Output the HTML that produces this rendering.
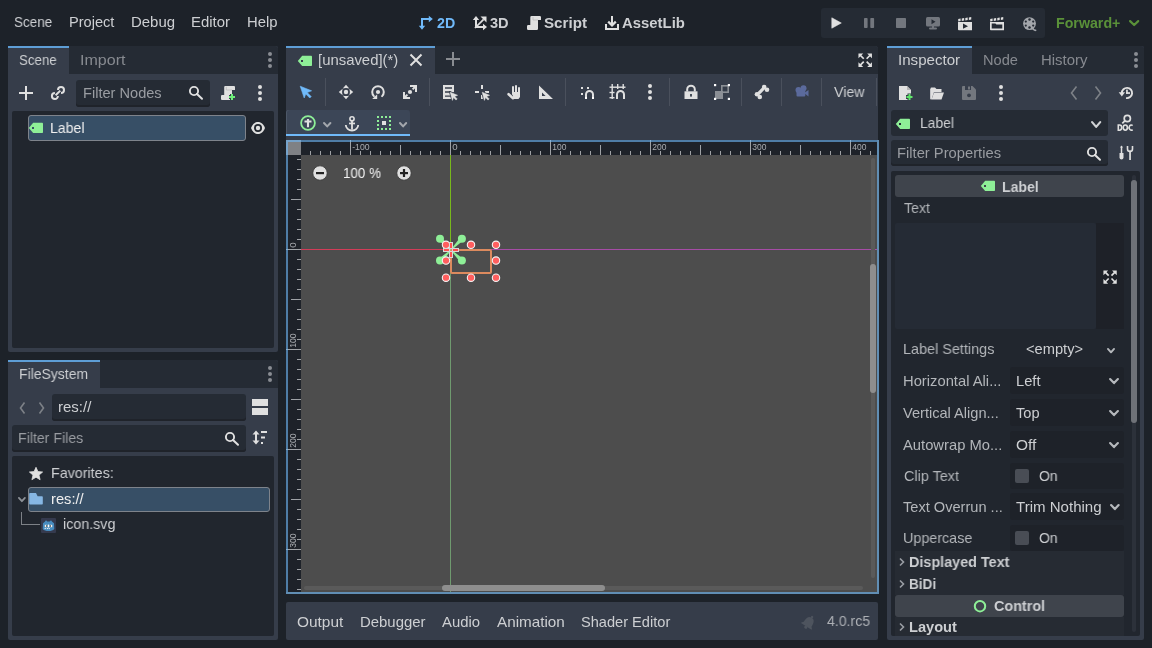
<!DOCTYPE html>
<html><head><meta charset="utf-8"><style>
html,body{margin:0;padding:0;}
body{width:1152px;height:648px;overflow:hidden;background:#1d2229;position:relative;font-family:"Liberation Sans",sans-serif;}
.t{position:absolute;white-space:nowrap;-webkit-font-smoothing:antialiased;will-change:transform;}
.r{position:absolute;display:block;overflow:visible;}
svg text{-webkit-font-smoothing:antialiased;}
</style></head><body>
<div class="t" style="left:14.3px;top:12.94px;font-size:14.6px;line-height:18px;color:#cdcfd2;font-weight:normal;transform:scaleX(0.9227);transform-origin:0 0;">Scene</div>
<div class="t" style="left:69.3px;top:12.94px;font-size:14.6px;line-height:18px;color:#cdcfd2;font-weight:normal;transform:scaleX(1.0000);transform-origin:0 0;">Project</div>
<div class="t" style="left:131.0px;top:12.94px;font-size:14.6px;line-height:18px;color:#cdcfd2;font-weight:normal;transform:scaleX(1.0233);transform-origin:0 0;">Debug</div>
<div class="t" style="left:191.0px;top:12.94px;font-size:14.6px;line-height:18px;color:#cdcfd2;font-weight:normal;transform:scaleX(1.0236);transform-origin:0 0;">Editor</div>
<div class="t" style="left:247.0px;top:12.94px;font-size:14.6px;line-height:18px;color:#cdcfd2;font-weight:normal;transform:scaleX(1.0167);transform-origin:0 0;">Help</div>
<svg class="r" style="left:418px;top:15px" width="16" height="16" viewBox="0 0 16 16"><g fill="#70bafa"><rect x="3" y="3" width="2" height="9"/><rect x="3" y="3" width="8" height="2"/><path d="M0.8 10.8 H7.2 L4 14.8 Z"/><path d="M10.8 0.8 V7.2 L14.8 4 Z"/></g></svg>
<div class="t" style="left:436.5px;top:15.08px;font-size:14.2px;line-height:17px;color:#70bafa;font-weight:bold;transform:scaleX(1.0000);transform-origin:0 0;">2D</div>
<svg class="r" style="left:472px;top:15px" width="16" height="16" viewBox="0 0 16 16"><g fill="#e0e0e0"><rect x="3" y="4" width="2" height="9"/><rect x="3" y="11" width="9" height="2"/><path d="M0.8 5 H7.2 L4 1 Z"/><path d="M11 8.8 V15.2 L15 12 Z"/><path d="M3.6 13.6 L2.4 12.4 L11 3.8 L12.2 5 Z"/><path d="M8.5 1.5 H14.5 V7.5 Z"/></g></svg>
<div class="t" style="left:490.0px;top:15.08px;font-size:14.2px;line-height:17px;color:#cdcfd2;font-weight:bold;transform:scaleX(1.0275);transform-origin:0 0;">3D</div>
<svg class="r" style="left:527px;top:16px" width="14" height="14" viewBox="0 0 14 14"><path d="M4.5 0 H12.8 a1.2 1.2 0 0 1 1.2 1.2 V4 H11 V12.8 a1.2 1.2 0 0 1 -1.2 1.2 H1.2 a1.2 1.2 0 0 1 -1.2 -1.2 V10.2 a1.2 1.2 0 0 1 1.2 -1.2 H3.3 V1.2 a1.2 1.2 0 0 1 1.2 -1.2 Z" fill="#e0e0e0"/><path d="M6 1 V4 H11" stroke="#b8b8b8" stroke-width="0.7" fill="none"/></svg>
<div class="t" style="left:544.0px;top:15.08px;font-size:14.2px;line-height:17px;color:#cdcfd2;font-weight:bold;transform:scaleX(1.0697);transform-origin:0 0;">Script</div>
<svg class="r" style="left:605px;top:16px" width="14" height="14" viewBox="0 0 14 14"><g fill="#e0e0e0"><path d="M0 8 H2 V12 H12 V8 H14 V14 H0 Z"/><rect x="6" y="0" width="2" height="8"/></g><path d="M3.2 5.6 L7 9.4 L10.8 5.6" stroke="#e0e0e0" stroke-width="2.2" fill="none"/></svg>
<div class="t" style="left:622.0px;top:15.08px;font-size:14.2px;line-height:17px;color:#cdcfd2;font-weight:bold;transform:scaleX(1.0500);transform-origin:0 0;">AssetLib</div>
<div class="r" style="left:821px;top:8px;width:224px;height:30px;background:#252b34;border-radius:3px"></div>
<svg class="r" style="left:831px;top:17px" width="12" height="12" viewBox="0 0 12 12"><path d="M0.8 0.8 L10.3 6 L0.8 11.2 Z" fill="#e0e0e0" stroke="#e0e0e0" stroke-width="0.6" stroke-linejoin="round"/></svg>
<svg class="r" style="left:863px;top:17px" width="12" height="12" viewBox="0 0 12 12"><rect x="1" y="1" width="3.6" height="10" rx="0.8" fill="#73777e"/><rect x="7.3" y="1" width="3.8" height="10" rx="0.8" fill="#73777e"/></svg>
<svg class="r" style="left:895px;top:17px" width="12" height="12" viewBox="0 0 12 12"><rect x="1" y="1" width="10" height="10" rx="0.8" fill="#73777e"/></svg>
<svg class="r" style="left:925px;top:16px" width="16" height="16" viewBox="0 0 16 16"><rect x="1" y="1" width="14" height="9.6" rx="1.5" fill="#73777e"/><path d="M6.5 3.3 L10.5 5.8 L6.5 8.3 Z" fill="#252b34"/><rect x="7" y="10" width="2" height="2" fill="#73777e"/><rect x="4" y="11.6" width="8" height="2" rx="1" fill="#73777e"/></svg>
<svg class="r" style="left:957px;top:16px" width="16" height="16" viewBox="0 0 16 16"><g fill="#e0e0e0"><path d="M1.20 3.00 l2.4 -0.4 v2.5 l-2.4 0.4 Z"/><path d="M4.75 2.50 l2.4 -0.4 v2.5 l-2.4 0.4 Z"/><path d="M8.30 2.00 l2.4 -0.4 v2.5 l-2.4 0.4 Z"/><path d="M11.85 1.50 l2.4 -0.4 v2.5 l-2.4 0.4 Z"/><path d="M1 6 H15 V14.2 H1.9 a0.9 0.9 0 0 1 -0.9 -0.9 Z"/></g><path d="M6 7.6 L11 10.2 L6 12.8 Z" fill="#252b34"/></svg>
<svg class="r" style="left:989px;top:16px" width="16" height="16" viewBox="0 0 16 16"><g fill="#e0e0e0"><path d="M1.20 3.00 l2.4 -0.4 v2.5 l-2.4 0.4 Z"/><path d="M4.75 2.50 l2.4 -0.4 v2.5 l-2.4 0.4 Z"/><path d="M8.30 2.00 l2.4 -0.4 v2.5 l-2.4 0.4 Z"/><path d="M11.85 1.50 l2.4 -0.4 v2.5 l-2.4 0.4 Z"/><path d="M1 6 H15 V14.2 H1.9 a0.9 0.9 0 0 1 -0.9 -0.9 Z"/></g><path d="M2.7 7.4 H6.4 L7.4 8.4 H13.3 V12.6 H2.7 Z" fill="#252b34"/></svg>
<svg class="r" style="left:1022px;top:16px" width="16" height="16" viewBox="0 0 16 16"><circle cx="7.5" cy="7.6" r="6.4" fill="#a3a6ab"/><g fill="#252b34"><circle cx="7.5" cy="3.6" r="1.25"/><circle cx="7.5" cy="11.6" r="1.25"/><circle cx="3.8" cy="5.6" r="1.1"/><circle cx="11.2" cy="5.6" r="1.1"/><circle cx="3.8" cy="9.6" r="1.1"/><circle cx="11.2" cy="9.6" r="1.1"/></g><path d="M10.8 12.8 Q12.4 14.6 13.6 14.3" stroke="#a3a6ab" stroke-width="1.7" fill="none" stroke-linecap="round"/></svg>
<div class="t" style="left:1055.6px;top:15.08px;font-size:14.2px;line-height:17px;color:#5a9139;font-weight:bold;transform:scaleX(1.0016);transform-origin:0 0;">Forward+</div>
<svg class="r" style="left:1126.8px;top:17.9px" width="14.30" height="10.10"><path d="M3.10 3.10 L7.15 7.00 L11.20 3.10" stroke="#5a9139" stroke-width="2.2" fill="none" stroke-linecap="round" stroke-linejoin="round"/></svg>
<div class="r" style="left:8px;top:46px;width:270px;height:306px;background:#363d4a;border-radius:2px"></div>
<div class="r" style="left:69px;top:46px;width:209px;height:28px;background:#252b34;border-top-right-radius:3px"></div>
<div class="r" style="left:8px;top:46px;width:61px;height:2px;background:#5e9ed6;"></div>
<div class="t" style="left:19.3px;top:50.94px;font-size:14.6px;line-height:18px;color:#cdcfd2;font-weight:normal;transform:scaleX(0.9106);transform-origin:0 0;">Scene</div>
<div class="t" style="left:80.0px;top:50.94px;font-size:14.6px;line-height:18px;color:#878a90;font-weight:normal;transform:scaleX(1.0990);transform-origin:0 0;">Import</div>
<svg class="r" style="left:267px;top:51px" width="6" height="18" viewBox="0 0 6 18"><circle cx="3" cy="3" r="2" fill="#8a8d93"/><circle cx="3" cy="9" r="2" fill="#8a8d93"/><circle cx="3" cy="15" r="2" fill="#8a8d93"/></svg>
<svg class="r" style="left:18px;top:85px" width="16" height="16" viewBox="0 0 16 16"><path d="M1.0 8 H15.0 M8 1.0 V15.0" stroke="#e0e0e0" stroke-width="2"/></svg>
<svg class="r" style="left:50px;top:85px" width="16" height="16" viewBox="0 0 16 16"><g fill="none" stroke="#e0e0e0" stroke-width="2"><path d="M7.9 11 A3 3 0 1 1 4.9 8"/><path d="M8 5 A3 3 0 1 1 11 8"/><path d="M5.6 10.3 L10.3 5.6"/></g></svg>
<div class="r" style="left:76px;top:80px;width:134px;height:27px;background:#252b34;border-radius:3px;box-shadow:inset 0 -2px 0 #1f232a"></div>
<div class="t" style="left:82.5px;top:83.94px;font-size:14.6px;line-height:18px;color:#9a9da2;font-weight:normal;transform:scaleX(0.9943);transform-origin:0 0;">Filter Nodes</div>
<svg class="r" style="left:187px;top:84px" width="16" height="16" viewBox="0 0 16 16"><circle cx="7" cy="7" r="4.1" stroke="#e0e0e0" stroke-width="1.9" fill="none"/><path d="M10 10 L15 14.8" stroke="#e0e0e0" stroke-width="2" stroke-linecap="round"/></svg>
<svg class="r" style="left:220px;top:85px" width="16" height="16" viewBox="0 0 16 16"><path d="M5.2 1 H14 a1 1 0 0 1 1 1 V5 H12 V14 a1 1 0 0 1 -1 1 H2 a1 1 0 0 1 -1 -1 V11 a1 1 0 0 1 1 -1 H4.2 V2 a1 1 0 0 1 1 -1 Z" fill="#e0e0e0"/><path d="M6.3 1.8 V5 H12" stroke="#bdbdbd" stroke-width="0.8" fill="none"/><path d="M9 12 H15 M12 9 V15" stroke="#363d4a" stroke-width="4"/><path d="M9 12 H15 M12 9 V15" stroke="#6ef07a" stroke-width="2"/></svg>
<svg class="r" style="left:257px;top:84px" width="6" height="18" viewBox="0 0 6 18"><circle cx="3" cy="3" r="2" fill="#e0e0e0"/><circle cx="3" cy="9" r="2" fill="#e0e0e0"/><circle cx="3" cy="15" r="2" fill="#e0e0e0"/></svg>
<div class="r" style="left:12px;top:111px;width:262px;height:237px;background:#21262e;border-radius:2px"></div>
<div class="r" style="left:28px;top:115px;width:218px;height:26px;background:#374f66;border:1px solid #7e838b;box-sizing:border-box;border-radius:3px"></div>
<svg class="r" style="left:28px;top:120px" width="16" height="16" viewBox="0 0 16 16"><path d="M0.8 8 L5.2 2.8 H14.2 a0.8 0.8 0 0 1 0.8 0.8 V12.3 a0.8 0.8 0 0 1 -0.8 0.8 H5.2 Z" fill="#8eef97"/><rect x="4" y="7" width="2" height="2" fill="#374f66"/></svg>
<div class="t" style="left:50.4px;top:118.94px;font-size:14.6px;line-height:18px;color:#f0f0f0;font-weight:normal;transform:scaleX(0.9664);transform-origin:0 0;">Label</div>
<svg class="r" style="left:250px;top:120px" width="16" height="16" viewBox="0 0 16 16"><path d="M1 8 C3 3.2 5.5 2 8 2 C10.5 2 13 3.2 15 8 C13 12.8 10.5 14 8 14 C5.5 14 3 12.8 1 8 Z" fill="#e0e0e0"/><circle cx="8" cy="8" r="4" fill="#21262e"/><circle cx="8" cy="8" r="2.2" fill="#e0e0e0"/></svg>
<div class="r" style="left:8px;top:360px;width:270px;height:280px;background:#363d4a;border-radius:2px"></div>
<div class="r" style="left:100px;top:360px;width:178px;height:28px;background:#252b34;border-top-right-radius:3px"></div>
<div class="r" style="left:8px;top:360px;width:92px;height:2px;background:#5e9ed6;"></div>
<div class="t" style="left:19.4px;top:364.94px;font-size:14.6px;line-height:18px;color:#cdcfd2;font-weight:normal;transform:scaleX(0.9571);transform-origin:0 0;">FileSystem</div>
<svg class="r" style="left:267px;top:365px" width="6" height="18" viewBox="0 0 6 18"><circle cx="3" cy="3" r="2" fill="#8a8d93"/><circle cx="3" cy="9" r="2" fill="#8a8d93"/><circle cx="3" cy="15" r="2" fill="#8a8d93"/></svg>
<svg class="r" style="left:16px;top:400px" width="12" height="16" viewBox="0 0 12 16"><path d="M8.5 2.5 L4.5 8 L8.5 13.5" stroke="#7d8187" stroke-width="1.6" fill="none"/></svg>
<svg class="r" style="left:36px;top:400px" width="12" height="16" viewBox="0 0 12 16"><path d="M3.5 2.5 L7.5 8 L3.5 13.5" stroke="#7d8187" stroke-width="1.6" fill="none"/></svg>
<div class="r" style="left:52px;top:394px;width:194px;height:27px;background:#252b34;border-radius:3px;box-shadow:inset 0 -2px 0 #1f232a"></div>
<div class="t" style="left:58.3px;top:397.94px;font-size:14.6px;line-height:18px;color:#cdcfd2;font-weight:normal;transform:scaleX(1.0277);transform-origin:0 0;">res://</div>
<svg class="r" style="left:252px;top:399px" width="16" height="17" viewBox="0 0 16 17"><rect x="0" y="0" width="16" height="7" fill="#e0e0e0"/><rect x="0" y="9" width="16" height="7" fill="#e0e0e0"/></svg>
<div class="r" style="left:12px;top:425px;width:234px;height:27px;background:#252b34;border-radius:3px;box-shadow:inset 0 -2px 0 #1f232a"></div>
<div class="t" style="left:18.1px;top:428.94px;font-size:14.6px;line-height:18px;color:#9a9da2;font-weight:normal;transform:scaleX(0.9688);transform-origin:0 0;">Filter Files</div>
<svg class="r" style="left:223px;top:430px" width="16" height="16" viewBox="0 0 16 16"><circle cx="7" cy="7" r="4.1" stroke="#e0e0e0" stroke-width="1.9" fill="none"/><path d="M10 10 L15 14.8" stroke="#e0e0e0" stroke-width="2" stroke-linecap="round"/></svg>
<svg class="r" style="left:252px;top:430px" width="16" height="16" viewBox="0 0 16 16"><g fill="#e0e0e0"><rect x="3" y="2.5" width="2" height="10"/><path d="M0.5 4.5 L4 0.5 L7.5 4.5 Z M0.5 10.5 L4 14.5 L7.5 10.5 Z"/><rect x="9" y="1" width="6" height="2"/><rect x="9" y="6.5" width="4" height="2"/><rect x="9" y="12" width="2" height="2"/></g></svg>
<div class="r" style="left:12px;top:456px;width:262px;height:180px;background:#21262e;border-radius:2px"></div>
<svg class="r" style="left:28px;top:466px" width="16" height="16" viewBox="0 0 16 16"><path d="M8 1.3 L9.9 5.6 L14.6 6 L11 9.1 L12.1 13.7 L8 11.2 L3.9 13.7 L5 9.1 L1.4 6 L6.1 5.6 Z" fill="#e0e0e0" stroke="#e0e0e0" stroke-width="0.8" stroke-linejoin="round"/></svg>
<div class="t" style="left:50.6px;top:463.94px;font-size:14.6px;line-height:18px;color:#cdcfd2;font-weight:normal;transform:scaleX(0.9797);transform-origin:0 0;">Favorites:</div>
<div class="r" style="left:28px;top:487px;width:242px;height:25px;background:#374f66;border:1px solid #7e838b;box-sizing:border-box;border-radius:3px"></div>
<svg class="r" style="left:15.7px;top:494.6px" width="11.80" height="9.10"><path d="M2.90 2.90 L5.90 6.20 L8.90 2.90" stroke="#8d9197" stroke-width="1.8" fill="none" stroke-linecap="round" stroke-linejoin="round"/></svg>
<svg class="r" style="left:29px;top:491px" width="15" height="15" viewBox="0 0 15 15"><path d="M0.2 2.9 a0.8 0.8 0 0 1 0.8 -0.8 H7 L8.6 5.3 H13 a0.8 0.8 0 0 1 0.8 0.8 V12.8 a0.8 0.8 0 0 1 -0.8 0.8 H1 a0.8 0.8 0 0 1 -0.8 -0.8 Z" fill="#86b7e4"/></svg>
<div class="t" style="left:50.6px;top:489.94px;font-size:14.6px;line-height:18px;color:#f0f0f0;font-weight:normal;transform:scaleX(1.0062);transform-origin:0 0;">res://</div>
<div class="r" style="left:21px;top:512px;width:1px;height:13px;background:#7d8187;"></div>
<div class="r" style="left:21px;top:524px;width:19px;height:1px;background:#7d8187;"></div>
<svg class="r" style="left:41px;top:518px" width="15" height="15" viewBox="0 0 15 15"><rect x="0" y="0" width="15" height="15" rx="1" fill="#353a4e"/><path d="M2 5.2 L3.8 3.8 L5 2.3 L6.3 3.4 H8.7 L10 2.3 L11.2 3.8 L13 5.2 L13.3 11 C12 12.6 10 13 7.5 13 C5 13 3 12.6 1.7 11 Z" fill="#478cbf"/><rect x="3.8" y="6.8" width="2.6" height="2.4" fill="#f4f0ec"/><rect x="8.6" y="6.8" width="2.6" height="2.4" fill="#f4f0ec"/><rect x="5" y="7.3" width="1.2" height="1.4" fill="#414042"/><rect x="8.8" y="7.3" width="1.2" height="1.4" fill="#414042"/><rect x="7" y="6.6" width="1" height="2.8" fill="#fff"/><g fill="#fff" opacity="0.85"><rect x="3.6" y="10" width="1.2" height="1.1"/><rect x="5.8" y="10" width="1.2" height="1.1"/><rect x="7.6" y="10" width="1.2" height="1.1"/></g></svg>
<div class="t" style="left:62.5px;top:515.44px;font-size:14.6px;line-height:18px;color:#cdcfd2;font-weight:normal;transform:scaleX(0.9795);transform-origin:0 0;">icon.svg</div>
<div class="r" style="left:286px;top:46px;width:592px;height:94px;background:#363d4a;border-radius:3px 3px 0 0"></div>
<div class="r" style="left:435px;top:46px;width:443px;height:28px;background:#252b34;border-top-right-radius:3px"></div>
<div class="r" style="left:286px;top:46px;width:149px;height:2px;background:#5e9ed6;"></div>
<svg class="r" style="left:297px;top:52.5px" width="16" height="16" viewBox="0 0 16 16"><path d="M0.8 8 L5.2 2.8 H14.2 a0.8 0.8 0 0 1 0.8 0.8 V12.3 a0.8 0.8 0 0 1 -0.8 0.8 H5.2 Z" fill="#8eef97"/><rect x="4" y="7" width="2" height="2" fill="#363d4a"/></svg>
<div class="t" style="left:317.5px;top:50.94px;font-size:14.6px;line-height:18px;color:#cdcfd2;font-weight:normal;transform:scaleX(1.0203);transform-origin:0 0;">[unsaved](*)</div>
<svg class="r" style="left:408px;top:52px" width="16" height="16" viewBox="0 0 16 16"><path d="M2.5 2.5 L13.5 13.5 M13.5 2.5 L2.5 13.5" stroke="#e0e0e0" stroke-width="2"/></svg>
<svg class="r" style="left:445px;top:51px" width="16" height="16" viewBox="0 0 16 16"><path d="M1.0 8 H15.0 M8 1.0 V15.0" stroke="#898c91" stroke-width="2"/></svg>
<svg class="r" style="left:857.8px;top:52.8px" width="14.4" height="14.4" viewBox="0 0 16 16"><g fill="#e0e0e0"><path d="M0.5 0.5 H5.8 L0.5 5.8 Z M15.5 0.5 H10.2 L15.5 5.8 Z M0.5 15.5 H5.8 L0.5 10.2 Z M15.5 15.5 H10.2 L15.5 10.2 Z"/></g><path d="M2.5 2.5 L6.4 6.4 M13.5 2.5 L9.6 6.4 M2.5 13.5 L6.4 9.6 M13.5 13.5 L9.6 9.6" stroke="#e0e0e0" stroke-width="1.9"/></svg>
<div class="r" style="left:325px;top:78px;width:1px;height:28px;background:#4a505c;"></div>
<div class="r" style="left:429px;top:78px;width:1px;height:28px;background:#4a505c;"></div>
<div class="r" style="left:565px;top:78px;width:1px;height:28px;background:#4a505c;"></div>
<div class="r" style="left:669px;top:78px;width:1px;height:28px;background:#4a505c;"></div>
<div class="r" style="left:741px;top:78px;width:1px;height:28px;background:#4a505c;"></div>
<div class="r" style="left:781px;top:78px;width:1px;height:28px;background:#4a505c;"></div>
<div class="r" style="left:821px;top:78px;width:1px;height:28px;background:#4a505c;"></div>
<div class="r" style="left:876px;top:78px;width:1px;height:28px;background:#4a505c;"></div>
<svg class="r" style="left:299px;top:85px" width="14" height="14" viewBox="0 0 14 14"><path d="M1.2 1.2 L12.6 5.8 L8.2 7.6 L12.2 11.6 L10.8 13 L6.8 9 L5.2 13 Z" fill="#70bafa" stroke="#70bafa" stroke-width="0.6" stroke-linejoin="round"/></svg>
<svg class="r" style="left:338px;top:84px" width="16" height="16" viewBox="0 0 16 16"><circle cx="8" cy="8" r="2.2" fill="#e0e0e0"/><g fill="#e0e0e0"><path d="M8 0.8 L11.3 4.6 Q8 3.5 4.7 4.6 Z"/><path d="M8 15.2 L11.3 11.4 Q8 12.5 4.7 11.4 Z"/><path d="M0.8 8 L4.6 4.7 Q3.5 8 4.6 11.3 Z"/><path d="M15.2 8 L11.4 4.7 Q12.5 8 11.4 11.3 Z"/></g></svg>
<svg class="r" style="left:370px;top:84px" width="16" height="16" viewBox="0 0 16 16"><circle cx="8" cy="8" r="2.1" fill="#e0e0e0"/><path d="M3.9 12.1 A5.8 5.8 0 1 1 12.1 12.1" stroke="#e0e0e0" stroke-width="2" fill="none" stroke-linecap="round"/><path d="M7.2 10.3 V15 H2.2 Z" fill="#e0e0e0"/></svg>
<svg class="r" style="left:402px;top:84px" width="16" height="16" viewBox="0 0 16 16"><circle cx="8" cy="8" r="2.1" fill="#e0e0e0"/><g stroke="#e0e0e0" stroke-width="2" fill="none"><path d="M8 2 H14 V8"/><path d="M2 8 V14 H8"/><path d="M13.5 2.5 L10.6 5.4"/><path d="M2.5 13.5 L5.4 10.6"/></g></svg>
<svg class="r" style="left:442px;top:84px" width="16" height="16" viewBox="0 0 16 16"><path d="M1 1 H12 V8.3 H9 V15 H1 Z M3 3.2 V4.8 H10 V3.2 Z M3 7.3 V8.7 H9 V7.3 Z M3 11.4 V12.8 H9 V11.4 Z" fill="#e0e0e0" fill-rule="evenodd"/><path d="M7.6 7.6 L16.2 11.2 L13.2 12.4 L15.6 14.8 L13.9 16.5 L11.5 14.1 L10.3 17 Z" fill="#363d4a" stroke="#363d4a" stroke-width="1.4" stroke-linejoin="round"/><path d="M8.2 8.2 L15.6 11.3 L12.7 12.4 L15.2 14.9 L14 16.1 L11.5 13.6 L10.4 16.4 Z" fill="#e0e0e0" stroke="#e0e0e0" stroke-width="0.5" stroke-linejoin="round"/></svg>
<svg class="r" style="left:474px;top:84px" width="16" height="16" viewBox="0 0 16 16"><g fill="#e0e0e0"><rect x="7" y="1" width="2" height="4"/><rect x="1" y="7" width="4" height="2"/><rect x="7" y="11" width="2" height="4"/><rect x="11" y="7" width="4" height="2"/></g><path d="M7.6 7.6 L16.2 11.2 L13.2 12.4 L15.6 14.8 L13.9 16.5 L11.5 14.1 L10.3 17 Z" fill="#363d4a" stroke="#363d4a" stroke-width="1.4" stroke-linejoin="round"/><path d="M8.2 8.2 L15.6 11.3 L12.7 12.4 L15.2 14.9 L14 16.1 L11.5 13.6 L10.4 16.4 Z" fill="#e0e0e0" stroke="#e0e0e0" stroke-width="0.5" stroke-linejoin="round"/></svg>
<svg class="r" style="left:506px;top:84px" width="16" height="16" viewBox="0 0 16 16"><g fill="#e0e0e0"><rect x="6" y="2" width="2" height="9" rx="1"/><rect x="9" y="1" width="2" height="10" rx="1"/><rect x="12" y="3" width="2" height="8" rx="1"/><path d="M6 8 H14 V13 L12.5 15 H7.5 Z"/></g><path d="M2.6 10.2 L7 14.2" stroke="#e0e0e0" stroke-width="2.6" stroke-linecap="round"/></svg>
<svg class="r" style="left:538px;top:84px" width="16" height="16" viewBox="0 0 16 16"><path d="M1 1.5 L15 15 H1 Z M4 8.5 V12 H7.6 Z" fill="#e0e0e0" fill-rule="evenodd"/></svg>
<svg class="r" style="left:580px;top:84px" width="16" height="16" viewBox="0 0 16 16"><g fill="#e0e0e0"><rect x="1" y="3" width="2" height="2"/><rect x="7" y="3" width="2" height="2"/><rect x="1" y="9" width="2" height="2"/></g><path d="M6 15 V10.5 a3.5 3.5 0 0 1 7 0 V15" stroke="#e0e0e0" stroke-width="2" fill="none"/><rect x="5" y="13" width="2" height="2" fill="#fff"/><rect x="12" y="13" width="2" height="2" fill="#fff"/></svg>
<svg class="r" style="left:609px;top:84px" width="17" height="16" viewBox="0 0 17 16"><g fill="#e0e0e0"><rect x="2.5" y="0" width="1.4" height="15"/><rect x="8" y="0" width="1.4" height="5"/><rect x="13.5" y="0" width="1.4" height="5"/><rect x="0.5" y="2.5" width="16" height="1.4"/><rect x="0.5" y="7.8" width="5" height="1.4"/><rect x="0.5" y="13" width="5" height="1.4"/></g><path d="M8 15 V10.5 a3.5 3.5 0 0 1 7 0 V15" stroke="#e0e0e0" stroke-width="2" fill="none"/></svg>
<svg class="r" style="left:647px;top:83.2px" width="6" height="18" viewBox="0 0 6 18"><circle cx="3" cy="3" r="2" fill="#e0e0e0"/><circle cx="3" cy="9" r="2" fill="#e0e0e0"/><circle cx="3" cy="15" r="2" fill="#e0e0e0"/></svg>
<svg class="r" style="left:683px;top:84px" width="16" height="16" viewBox="0 0 16 16"><path d="M4.2 7.5 V5.5 a3.8 3.8 0 0 1 7.6 0 V7.5" stroke="#e0e0e0" stroke-width="2" fill="none"/><path d="M1.5 7.3 H14.5 V15 H1.5 Z" fill="#e0e0e0"/><rect x="7.1" y="10" width="1.8" height="2.6" fill="#363d4a"/></svg>
<svg class="r" style="left:714px;top:84px" width="16" height="16" viewBox="0 0 16 16"><rect x="1" y="7" width="8" height="8" fill="#8b8f95"/><rect x="7.8" y="1.8" width="6.4" height="6.4" stroke="#8b8f95" stroke-width="1.6" fill="none"/><g fill="#fff"><rect x="0" y="0" width="2.2" height="2.2"/><rect x="13.8" y="0" width="2.2" height="2.2"/><rect x="0" y="13.8" width="2.2" height="2.2"/><rect x="13.8" y="13.8" width="2.2" height="2.2"/></g></svg>
<svg class="r" style="left:754px;top:84px" width="16" height="16" viewBox="0 0 16 16"><g fill="#e0e0e0"><path d="M4.2 9.8 L9.8 4.2" stroke="#e0e0e0" stroke-width="3.2"/><circle cx="3" cy="10.2" r="2.3"/><circle cx="5.8" cy="13" r="2.3"/><circle cx="10.2" cy="3" r="2.3"/><circle cx="13" cy="5.8" r="2.3"/></g></svg>
<svg class="r" style="left:795px;top:84px" width="14" height="14" viewBox="0 0 14 14"><g fill="#5b6a9c"><circle cx="3.5" cy="6" r="3"/><circle cx="8.5" cy="4.3" r="3"/><rect x="1.5" y="5.5" width="8.8" height="7" rx="1"/><path d="M9 9 L13.5 6 V12.5 Z"/></g></svg>
<div class="t" style="left:833.8px;top:82.94px;font-size:14.6px;line-height:18px;color:#cdcfd2;font-weight:normal;transform:scaleX(0.9745);transform-origin:0 0;">View</div>
<div class="r" style="left:286px;top:110px;width:124px;height:24px;background:#3c4657;border-radius:3px 3px 0 0;box-shadow:inset 1px 0 0 #4d5868"></div>
<div class="r" style="left:286px;top:134px;width:124px;height:2px;background:#70bafa;"></div>
<svg class="r" style="left:300px;top:115px" width="16" height="16" viewBox="0 0 16 16"><circle cx="8" cy="8" r="6.9" stroke="#8eef97" stroke-width="1.8" fill="none"/><path d="M4.5 6.5 H11.5 M8 4 V12.3" stroke="#e0e0e0" stroke-width="2.1"/></svg>
<svg class="r" style="left:321px;top:119.6px" width="12.40" height="9.40"><path d="M3.00 3.00 L6.20 6.40 L9.40 3.00" stroke="#a3a7ad" stroke-width="2" fill="none" stroke-linecap="round" stroke-linejoin="round"/></svg>
<svg class="r" style="left:344px;top:115px" width="16" height="16" viewBox="0 0 16 16"><circle cx="8" cy="3.8" r="2.1" stroke="#e0e0e0" stroke-width="1.6" fill="none"/><rect x="7.1" y="5.6" width="1.8" height="9" fill="#e0e0e0"/><rect x="5" y="7.6" width="6" height="1.7" fill="#e0e0e0"/><path d="M1.8 10 A6.2 5.5 0 0 0 14.2 10" stroke="#e0e0e0" stroke-width="1.8" fill="none"/></svg>
<svg class="r" style="left:376px;top:115px" width="16" height="16" viewBox="0 0 16 16"><rect x="1" y="1" width="2" height="2" fill="#8eef97"/><rect x="5" y="1" width="2" height="2" fill="#8eef97"/><rect x="9" y="1" width="2" height="2" fill="#8eef97"/><rect x="13" y="1" width="2" height="2" fill="#8eef97"/><rect x="1" y="5" width="2" height="2" fill="#8eef97"/><rect x="13" y="5" width="2" height="2" fill="#8eef97"/><rect x="1" y="9" width="2" height="2" fill="#8eef97"/><rect x="13" y="9" width="2" height="2" fill="#8eef97"/><rect x="1" y="13" width="2" height="2" fill="#8eef97"/><rect x="5" y="13" width="2" height="2" fill="#8eef97"/><rect x="9" y="13" width="2" height="2" fill="#8eef97"/><rect x="13" y="13" width="2" height="2" fill="#8eef97"/><rect x="6" y="6" width="4" height="4" fill="#e0e0e0"/></svg>
<svg class="r" style="left:396.8px;top:119.6px" width="12.20" height="9.40"><path d="M3.00 3.00 L6.10 6.40 L9.20 3.00" stroke="#a3a7ad" stroke-width="2" fill="none" stroke-linecap="round" stroke-linejoin="round"/></svg>
<div class="r" style="left:286px;top:140px;width:593px;height:454px;background:#4d4d4d;"></div>
<div class="r" style="left:286px;top:140px;width:591px;height:15px;background:#1e2229;"></div>
<div class="r" style="left:286px;top:140px;width:15px;height:452px;background:#1e2229;"></div>
<div class="r" style="left:286px;top:140px;width:15px;height:15px;background:#7f8185;"></div>
<svg class="r" style="left:0;top:0" width="1152" height="648"><rect x="310" y="151" width="1" height="4" fill="#9fa2a6"/><rect x="320" y="151" width="1" height="4" fill="#9fa2a6"/><rect x="330" y="151" width="1" height="4" fill="#9fa2a6"/><rect x="340" y="151" width="1" height="4" fill="#9fa2a6"/><rect x="350" y="140" width="1" height="15" fill="#9fa2a6"/><rect x="360" y="151" width="1" height="4" fill="#9fa2a6"/><rect x="370" y="151" width="1" height="4" fill="#9fa2a6"/><rect x="380" y="151" width="1" height="4" fill="#9fa2a6"/><rect x="390" y="151" width="1" height="4" fill="#9fa2a6"/><rect x="400" y="145" width="1" height="10" fill="#9fa2a6"/><rect x="410" y="151" width="1" height="4" fill="#9fa2a6"/><rect x="420" y="151" width="1" height="4" fill="#9fa2a6"/><rect x="430" y="151" width="1" height="4" fill="#9fa2a6"/><rect x="440" y="151" width="1" height="4" fill="#9fa2a6"/><rect x="450" y="140" width="1" height="15" fill="#9fa2a6"/><rect x="460" y="151" width="1" height="4" fill="#9fa2a6"/><rect x="470" y="151" width="1" height="4" fill="#9fa2a6"/><rect x="480" y="151" width="1" height="4" fill="#9fa2a6"/><rect x="490" y="151" width="1" height="4" fill="#9fa2a6"/><rect x="500" y="145" width="1" height="10" fill="#9fa2a6"/><rect x="510" y="151" width="1" height="4" fill="#9fa2a6"/><rect x="520" y="151" width="1" height="4" fill="#9fa2a6"/><rect x="530" y="151" width="1" height="4" fill="#9fa2a6"/><rect x="540" y="151" width="1" height="4" fill="#9fa2a6"/><rect x="550" y="140" width="1" height="15" fill="#9fa2a6"/><rect x="560" y="151" width="1" height="4" fill="#9fa2a6"/><rect x="570" y="151" width="1" height="4" fill="#9fa2a6"/><rect x="580" y="151" width="1" height="4" fill="#9fa2a6"/><rect x="590" y="151" width="1" height="4" fill="#9fa2a6"/><rect x="600" y="145" width="1" height="10" fill="#9fa2a6"/><rect x="610" y="151" width="1" height="4" fill="#9fa2a6"/><rect x="620" y="151" width="1" height="4" fill="#9fa2a6"/><rect x="630" y="151" width="1" height="4" fill="#9fa2a6"/><rect x="640" y="151" width="1" height="4" fill="#9fa2a6"/><rect x="650" y="140" width="1" height="15" fill="#9fa2a6"/><rect x="660" y="151" width="1" height="4" fill="#9fa2a6"/><rect x="670" y="151" width="1" height="4" fill="#9fa2a6"/><rect x="680" y="151" width="1" height="4" fill="#9fa2a6"/><rect x="690" y="151" width="1" height="4" fill="#9fa2a6"/><rect x="700" y="145" width="1" height="10" fill="#9fa2a6"/><rect x="710" y="151" width="1" height="4" fill="#9fa2a6"/><rect x="720" y="151" width="1" height="4" fill="#9fa2a6"/><rect x="730" y="151" width="1" height="4" fill="#9fa2a6"/><rect x="740" y="151" width="1" height="4" fill="#9fa2a6"/><rect x="750" y="140" width="1" height="15" fill="#9fa2a6"/><rect x="760" y="151" width="1" height="4" fill="#9fa2a6"/><rect x="770" y="151" width="1" height="4" fill="#9fa2a6"/><rect x="780" y="151" width="1" height="4" fill="#9fa2a6"/><rect x="790" y="151" width="1" height="4" fill="#9fa2a6"/><rect x="800" y="145" width="1" height="10" fill="#9fa2a6"/><rect x="810" y="151" width="1" height="4" fill="#9fa2a6"/><rect x="820" y="151" width="1" height="4" fill="#9fa2a6"/><rect x="830" y="151" width="1" height="4" fill="#9fa2a6"/><rect x="840" y="151" width="1" height="4" fill="#9fa2a6"/><rect x="850" y="140" width="1" height="15" fill="#9fa2a6"/><rect x="860" y="151" width="1" height="4" fill="#9fa2a6"/><rect x="870" y="151" width="1" height="4" fill="#9fa2a6"/><rect x="297" y="159" width="4" height="1" fill="#9fa2a6"/><rect x="297" y="169" width="4" height="1" fill="#9fa2a6"/><rect x="297" y="179" width="4" height="1" fill="#9fa2a6"/><rect x="297" y="189" width="4" height="1" fill="#9fa2a6"/><rect x="291" y="199" width="10" height="1" fill="#9fa2a6"/><rect x="297" y="209" width="4" height="1" fill="#9fa2a6"/><rect x="297" y="219" width="4" height="1" fill="#9fa2a6"/><rect x="297" y="229" width="4" height="1" fill="#9fa2a6"/><rect x="297" y="239" width="4" height="1" fill="#9fa2a6"/><rect x="286" y="249" width="15" height="1" fill="#9fa2a6"/><rect x="297" y="259" width="4" height="1" fill="#9fa2a6"/><rect x="297" y="269" width="4" height="1" fill="#9fa2a6"/><rect x="297" y="279" width="4" height="1" fill="#9fa2a6"/><rect x="297" y="289" width="4" height="1" fill="#9fa2a6"/><rect x="291" y="299" width="10" height="1" fill="#9fa2a6"/><rect x="297" y="309" width="4" height="1" fill="#9fa2a6"/><rect x="297" y="319" width="4" height="1" fill="#9fa2a6"/><rect x="297" y="329" width="4" height="1" fill="#9fa2a6"/><rect x="297" y="339" width="4" height="1" fill="#9fa2a6"/><rect x="286" y="349" width="15" height="1" fill="#9fa2a6"/><rect x="297" y="359" width="4" height="1" fill="#9fa2a6"/><rect x="297" y="369" width="4" height="1" fill="#9fa2a6"/><rect x="297" y="379" width="4" height="1" fill="#9fa2a6"/><rect x="297" y="389" width="4" height="1" fill="#9fa2a6"/><rect x="291" y="399" width="10" height="1" fill="#9fa2a6"/><rect x="297" y="409" width="4" height="1" fill="#9fa2a6"/><rect x="297" y="419" width="4" height="1" fill="#9fa2a6"/><rect x="297" y="429" width="4" height="1" fill="#9fa2a6"/><rect x="297" y="439" width="4" height="1" fill="#9fa2a6"/><rect x="286" y="449" width="15" height="1" fill="#9fa2a6"/><rect x="297" y="459" width="4" height="1" fill="#9fa2a6"/><rect x="297" y="469" width="4" height="1" fill="#9fa2a6"/><rect x="297" y="479" width="4" height="1" fill="#9fa2a6"/><rect x="297" y="489" width="4" height="1" fill="#9fa2a6"/><rect x="291" y="499" width="10" height="1" fill="#9fa2a6"/><rect x="297" y="509" width="4" height="1" fill="#9fa2a6"/><rect x="297" y="519" width="4" height="1" fill="#9fa2a6"/><rect x="297" y="529" width="4" height="1" fill="#9fa2a6"/><rect x="297" y="539" width="4" height="1" fill="#9fa2a6"/><rect x="286" y="549" width="15" height="1" fill="#9fa2a6"/><rect x="297" y="559" width="4" height="1" fill="#9fa2a6"/><rect x="297" y="569" width="4" height="1" fill="#9fa2a6"/><rect x="297" y="579" width="4" height="1" fill="#9fa2a6"/><rect x="297" y="589" width="4" height="1" fill="#9fa2a6"/></svg>
<svg class="r" style="left:0;top:0;will-change:transform" width="1152" height="648" font-family="Liberation Sans"><text x="352.20" y="150.2" font-size="9.8" textLength="17.40" lengthAdjust="spacingAndGlyphs" fill="#a9acb0">-100</text><text x="452.20" y="150.2" font-size="9.8" textLength="5.40" lengthAdjust="spacingAndGlyphs" fill="#a9acb0">0</text><text x="552.20" y="150.2" font-size="9.8" textLength="14.20" lengthAdjust="spacingAndGlyphs" fill="#a9acb0">100</text><text x="652.20" y="150.2" font-size="9.8" textLength="14.20" lengthAdjust="spacingAndGlyphs" fill="#a9acb0">200</text><text x="752.20" y="150.2" font-size="9.8" textLength="14.20" lengthAdjust="spacingAndGlyphs" fill="#a9acb0">300</text><text x="852.20" y="150.2" font-size="9.8" textLength="14.20" lengthAdjust="spacingAndGlyphs" fill="#a9acb0">400</text><text transform="translate(296.3 247.20) rotate(-90)" x="-0.6" y="0" font-size="9.8" textLength="5.40" lengthAdjust="spacingAndGlyphs" fill="#a9acb0">0</text><text transform="translate(296.3 347.20) rotate(-90)" x="-0.6" y="0" font-size="9.8" textLength="14.20" lengthAdjust="spacingAndGlyphs" fill="#a9acb0">100</text><text transform="translate(296.3 447.20) rotate(-90)" x="-0.6" y="0" font-size="9.8" textLength="14.20" lengthAdjust="spacingAndGlyphs" fill="#a9acb0">200</text><text transform="translate(296.3 547.20) rotate(-90)" x="-0.6" y="0" font-size="9.8" textLength="14.20" lengthAdjust="spacingAndGlyphs" fill="#a9acb0">300</text></svg>
<div class="r" style="left:301px;top:249px;width:149px;height:1px;background:#d23c58;"></div>
<div class="r" style="left:450px;top:249px;width:427px;height:1px;background:#a64ca6;"></div>
<div class="r" style="left:450px;top:155px;width:1px;height:94px;background:#78b81c;"></div>
<div class="r" style="left:450px;top:250px;width:1px;height:342px;background:#6f9a6f;"></div>
<svg class="r" style="left:311px;top:164px" width="18" height="18" viewBox="0 0 18 18"><circle cx="9" cy="9" r="7.2" fill="#e0e0e0" stroke="#3a3a3a" stroke-width="0.8"/><rect x="5" y="8" width="8" height="2.2" fill="#222"/></svg>
<div class="t" style="left:343.0px;top:164.65px;font-size:14px;line-height:17px;color:#f4f4f4;font-weight:normal;transform:scaleX(0.9572);transform-origin:0 0;">100 %</div>
<svg class="r" style="left:395px;top:164px" width="18" height="18" viewBox="0 0 18 18"><circle cx="9" cy="9" r="7.2" fill="#e0e0e0" stroke="#3a3a3a" stroke-width="0.8"/><rect x="5" y="8" width="8" height="2.2" fill="#222"/><rect x="7.9" y="5" width="2.2" height="8" fill="#222"/></svg>
<svg class="r" style="left:0;top:0" width="1152" height="648"><polygon points="451.29,249.72 441.57,237.26 438.43,240.34 450.71,250.28" fill="#8eef97"/><polygon points="451.29,250.28 463.48,240.33 460.32,237.27 450.71,249.72" fill="#8eef97"/><polygon points="450.72,249.71 438.47,259.02 441.53,262.18 451.28,250.29" fill="#8eef97"/><polygon points="450.72,250.29 460.37,262.18 463.43,259.02 451.28,249.71" fill="#8eef97"/><circle cx="440" cy="238.8" r="4" fill="#8eef97"/><circle cx="461.9" cy="238.8" r="4" fill="#8eef97"/><circle cx="440" cy="260.6" r="4" fill="#8eef97"/><circle cx="461.9" cy="260.6" r="4" fill="#8eef97"/><rect x="451" y="250" width="40" height="23" rx="1" fill="none" stroke="#dc8a5e" stroke-width="2"/><circle cx="446" cy="244.8" r="3.7" fill="#ff5f5f" stroke="#f4f4f4" stroke-width="1.1"/><circle cx="446" cy="260.6" r="3.7" fill="#ff5f5f" stroke="#f4f4f4" stroke-width="1.1"/><circle cx="446" cy="277.7" r="3.7" fill="#ff5f5f" stroke="#f4f4f4" stroke-width="1.1"/><circle cx="471" cy="244.8" r="3.7" fill="#ff5f5f" stroke="#f4f4f4" stroke-width="1.1"/><circle cx="471" cy="277.7" r="3.7" fill="#ff5f5f" stroke="#f4f4f4" stroke-width="1.1"/><circle cx="496" cy="244.8" r="3.7" fill="#ff5f5f" stroke="#f4f4f4" stroke-width="1.1"/><circle cx="496" cy="260.6" r="3.7" fill="#ff5f5f" stroke="#f4f4f4" stroke-width="1.1"/><circle cx="496" cy="277.7" r="3.7" fill="#ff5f5f" stroke="#f4f4f4" stroke-width="1.1"/><rect x="443" y="248" width="7" height="4" fill="#d8d8d8"/><rect x="444" y="249" width="5" height="2" fill="#ff5252"/><rect x="452" y="248" width="7" height="4" fill="#d8d8d8"/><rect x="453" y="249" width="5" height="2" fill="#ff5252"/><rect x="449" y="242" width="4" height="7" fill="#d8d8d8"/><rect x="450" y="243" width="2" height="5" fill="#ff5252"/><rect x="449" y="251" width="4" height="7" fill="#d8d8d8"/><rect x="450" y="252" width="2" height="5" fill="#ff5252"/></svg>
<div class="r" style="left:871px;top:158px;width:4px;height:420px;background:#5a5a5a;border-radius:2px"></div>
<div class="r" style="left:870px;top:264px;width:6px;height:129px;background:#8e8e8e;border-radius:3px"></div>
<div class="r" style="left:304px;top:586px;width:559px;height:4px;background:#5a5a5a;border-radius:2px"></div>
<div class="r" style="left:442px;top:585px;width:163px;height:6px;background:#8e8e8e;border-radius:3px"></div>
<div class="r" style="left:286px;top:140px;width:593px;height:454px;background:transparent;box-sizing:border-box;border:2px solid rgba(112,186,250,0.6)"></div>
<div class="r" style="left:286px;top:602px;width:592px;height:38px;background:#363d4a;border-radius:2px"></div>
<div class="t" style="left:296.5px;top:612.94px;font-size:14.6px;line-height:18px;color:#cdcfd2;font-weight:normal;transform:scaleX(1.0571);transform-origin:0 0;">Output</div>
<div class="t" style="left:359.5px;top:612.94px;font-size:14.6px;line-height:18px;color:#cdcfd2;font-weight:normal;transform:scaleX(1.0218);transform-origin:0 0;">Debugger</div>
<div class="t" style="left:441.7px;top:612.94px;font-size:14.6px;line-height:18px;color:#cdcfd2;font-weight:normal;transform:scaleX(1.0188);transform-origin:0 0;">Audio</div>
<div class="t" style="left:497.0px;top:612.94px;font-size:14.6px;line-height:18px;color:#cdcfd2;font-weight:normal;transform:scaleX(1.0447);transform-origin:0 0;">Animation</div>
<div class="t" style="left:580.8px;top:612.94px;font-size:14.6px;line-height:18px;color:#cdcfd2;font-weight:normal;transform:scaleX(0.9955);transform-origin:0 0;">Shader Editor</div>
<svg class="r" style="left:801px;top:613.5px" width="16" height="16" viewBox="0 0 16 16"><g transform="rotate(32 8 8)" fill="#4e545e"><circle cx="8" cy="2.2" r="1.2"/><path d="M3.4 10.6 C3.4 5.6 4.6 2.9 8 2.9 C11.4 2.9 12.6 5.6 12.6 10.6 L14.2 12.4 V13.2 H1.8 V12.4 Z"/><circle cx="8" cy="14" r="1.6"/></g></svg>
<div class="t" style="left:826.9px;top:612.24px;font-size:14.6px;line-height:18px;color:#adb0b5;font-weight:normal;transform:scaleX(0.9664);transform-origin:0 0;">4.0.rc5</div>
<div class="r" style="left:887px;top:46px;width:257px;height:594px;background:#363d4a;border-radius:2px"></div>
<div class="r" style="left:972px;top:46px;width:172px;height:28px;background:#252b34;border-top-right-radius:3px"></div>
<div class="r" style="left:887px;top:46px;width:85px;height:2px;background:#5e9ed6;"></div>
<div class="t" style="left:898.0px;top:50.94px;font-size:14.6px;line-height:18px;color:#cdcfd2;font-weight:normal;transform:scaleX(1.0349);transform-origin:0 0;">Inspector</div>
<div class="t" style="left:983.4px;top:50.94px;font-size:14.6px;line-height:18px;color:#878a90;font-weight:normal;transform:scaleX(1.0000);transform-origin:0 0;">Node</div>
<div class="t" style="left:1041.4px;top:50.94px;font-size:14.6px;line-height:18px;color:#878a90;font-weight:normal;transform:scaleX(1.0242);transform-origin:0 0;">History</div>
<svg class="r" style="left:1133px;top:51px" width="6" height="18" viewBox="0 0 6 18"><circle cx="3" cy="3" r="2" fill="#8a8d93"/><circle cx="3" cy="9" r="2" fill="#8a8d93"/><circle cx="3" cy="15" r="2" fill="#8a8d93"/></svg>
<svg class="r" style="left:898px;top:85px" width="16" height="16" viewBox="0 0 16 16"><path d="M1 1 H9 L13 5 V15 H1 Z" fill="#e0e0e0"/><path d="M9 1 V5 H13" fill="#b5b5b5"/><path d="M8 12 H15 M11.5 8.5 V15.5" stroke="#363d4a" stroke-width="4"/><path d="M8.5 12 H14.5 M11.5 9 V15" stroke="#5fe36a" stroke-width="2"/></svg>
<svg class="r" style="left:929px;top:85px" width="16" height="16" viewBox="0 0 16 16"><path d="M1.5 3.5 a1 1 0 0 1 1 -1 H6 L7.5 4 H12.5 V7 H5 L2.5 14.5 H1.5 Z" fill="#e0e0e0"/><path d="M5 7.5 H15 L12.5 14.5 H2.5 Z" fill="#e0e0e0"/><path d="M2 14 V4" stroke="#e0e0e0" stroke-width="1.3"/></svg>
<svg class="r" style="left:961px;top:85px" width="16" height="16" viewBox="0 0 16 16"><path d="M1 2 a1 1 0 0 1 1 -1 H11.5 L15 4.5 V14 a1 1 0 0 1 -1 1 H2 a1 1 0 0 1 -1 -1 Z" fill="#73777e"/><rect x="4" y="1" width="6" height="4" fill="#363d4a"/><rect x="7" y="1.5" width="2" height="3" fill="#73777e"/><circle cx="8" cy="10.3" r="1.9" fill="#363d4a"/></svg>
<svg class="r" style="left:998px;top:83.8px" width="6" height="18" viewBox="0 0 6 18"><circle cx="3" cy="3" r="2" fill="#e0e0e0"/><circle cx="3" cy="9" r="2" fill="#e0e0e0"/><circle cx="3" cy="15" r="2" fill="#e0e0e0"/></svg>
<svg class="r" style="left:1067px;top:85px" width="14" height="16" viewBox="0 0 14 16"><path d="M9.5 1.5 L4.5 8 L9.5 14.5" stroke="#7d8187" stroke-width="1.6" fill="none"/></svg>
<svg class="r" style="left:1091px;top:85px" width="14" height="16" viewBox="0 0 14 16"><path d="M4.5 1.5 L9.5 8 L4.5 14.5" stroke="#7d8187" stroke-width="1.6" fill="none"/></svg>
<svg class="r" style="left:1118px;top:85px" width="16" height="16" viewBox="0 0 16 16"><path d="M3.9 8 A5.1 5.1 0 1 1 8.1 13" stroke="#e0e0e0" stroke-width="1.9" fill="none"/><path d="M0.7 7.3 H7 L3.85 11.6 Z" fill="#e0e0e0"/><rect x="8.1" y="4.6" width="1.7" height="4.2" fill="#e0e0e0"/><rect x="8.1" y="7.2" width="3.9" height="1.7" fill="#e0e0e0"/></svg>
<div class="r" style="left:891px;top:110px;width:217px;height:26px;background:#252b34;border-radius:3px"></div>
<svg class="r" style="left:895px;top:116.4px" width="16" height="16" viewBox="0 0 16 16"><path d="M0.8 8 L5.2 2.8 H14.2 a0.8 0.8 0 0 1 0.8 0.8 V12.3 a0.8 0.8 0 0 1 -0.8 0.8 H5.2 Z" fill="#8eef97"/><rect x="4" y="7" width="2" height="2" fill="#252b34"/></svg>
<div class="t" style="left:919.6px;top:113.94px;font-size:14.6px;line-height:18px;color:#cdcfd2;font-weight:normal;transform:scaleX(0.9524);transform-origin:0 0;">Label</div>
<svg class="r" style="left:1088.8px;top:118.9px" width="14.30" height="11.00"><path d="M3.10 3.10 L7.15 7.90 L11.20 3.10" stroke="#d0d2d5" stroke-width="2.2" fill="none" stroke-linecap="round" stroke-linejoin="round"/></svg>
<svg class="r" style="left:1117px;top:114px" width="17" height="18" viewBox="0 0 17 18"><circle cx="10.3" cy="4.5" r="3.1" stroke="#e0e0e0" stroke-width="1.7" fill="none"/><path d="M8.1 6.7 L5.3 9.3" stroke="#e0e0e0" stroke-width="1.8"/><g stroke="#e0e0e0" stroke-width="1.6" fill="none"><path d="M1.3 11 V16.2 H2.6 a2.1 2.6 0 0 0 0 -5.2 Z"/><ellipse cx="8.3" cy="13.6" rx="2.1" ry="2.6"/><path d="M15.6 11.6 a2.1 2.6 0 1 0 0 4.0"/></g></svg>
<div class="r" style="left:891px;top:140px;width:217px;height:26px;background:#252b34;border-radius:3px;box-shadow:inset 0 -2px 0 #1f232a"></div>
<div class="t" style="left:897.3px;top:143.94px;font-size:14.6px;line-height:18px;color:#9a9da2;font-weight:normal;transform:scaleX(1.0097);transform-origin:0 0;">Filter Properties</div>
<svg class="r" style="left:1085px;top:145px" width="16" height="16" viewBox="0 0 16 16"><circle cx="7" cy="7" r="4.1" stroke="#e0e0e0" stroke-width="1.9" fill="none"/><path d="M10 10 L15 14.8" stroke="#e0e0e0" stroke-width="2" stroke-linecap="round"/></svg>
<svg class="r" style="left:1118px;top:145px" width="16" height="16" viewBox="0 0 16 16"><path d="M3.5 1.5 V8" stroke="#e0e0e0" stroke-width="1.5"/><path d="M3.5 0.5 L5 2.5 H2 Z" fill="#e0e0e0"/><path d="M1.5 8 H5.5 V12.5 a2 2 0 0 1 -4 0 Z" fill="#e0e0e0"/><path d="M9.5 1 V4 a2.5 2.5 0 0 0 5 0 V1" stroke="#e0e0e0" stroke-width="1.6" fill="none"/><rect x="11.2" y="5.5" width="1.7" height="9.5" fill="#e0e0e0"/></svg>
<div class="r" style="left:891px;top:171px;width:249px;height:465px;background:#21262e;border-radius:2px"></div>
<div class="r" style="left:1132px;top:175px;width:4px;height:457px;background:#2c313a;border-radius:2px"></div>
<div class="r" style="left:1131px;top:180px;width:6px;height:243px;background:#6f7278;border-radius:3px"></div>
<div class="r" style="left:895px;top:175px;width:229px;height:22px;background:#3f444c;border-radius:3px"></div>
<svg class="r" style="left:980px;top:178px" width="16" height="16" viewBox="0 0 16 16"><path d="M0.8 8 L5.2 2.8 H14.2 a0.8 0.8 0 0 1 0.8 0.8 V12.3 a0.8 0.8 0 0 1 -0.8 0.8 H5.2 Z" fill="#8eef97"/><rect x="4" y="7" width="2" height="2" fill="#3f444c"/></svg>
<div class="t" style="left:1001.8px;top:177.94px;font-size:14.6px;line-height:18px;color:#cdcfd2;font-weight:bold;transform:scaleX(0.9633);transform-origin:0 0;">Label</div>
<div class="t" style="left:903.8px;top:199.24px;font-size:14.6px;line-height:18px;color:#b3b6ba;font-weight:normal;transform:scaleX(0.9701);transform-origin:0 0;">Text</div>
<div class="r" style="left:895px;top:223px;width:201px;height:106px;background:#252b35;border-radius:2px"></div>
<div class="r" style="left:1096px;top:223px;width:28px;height:106px;background:#1e2128;"></div>
<svg class="r" style="left:1103px;top:269.8px" width="14.2" height="14.2" viewBox="0 0 16 16"><g fill="#e0e0e0"><path d="M0.5 0.5 H5.8 L0.5 5.8 Z M15.5 0.5 H10.2 L15.5 5.8 Z M0.5 15.5 H5.8 L0.5 10.2 Z M15.5 15.5 H10.2 L15.5 10.2 Z"/></g><path d="M2.5 2.5 L6.4 6.4 M13.5 2.5 L9.6 6.4 M2.5 13.5 L6.4 9.6 M13.5 13.5 L9.6 9.6" stroke="#e0e0e0" stroke-width="1.9"/></svg>
<div class="t" style="left:903.4px;top:339.94px;font-size:14.6px;line-height:18px;color:#b3b6ba;font-weight:normal;transform:scaleX(0.9881);transform-origin:0 0;">Label Settings</div>
<div class="t" style="left:1025.5px;top:339.94px;font-size:14.6px;line-height:18px;color:#cdcfd2;font-weight:normal;transform:scaleX(1.0053);transform-origin:0 0;">&lt;empty&gt;</div>
<svg class="r" style="left:1105px;top:345.7px" width="12.00" height="9.30"><path d="M2.95 2.95 L6.00 6.35 L9.05 2.95" stroke="#b5b8bc" stroke-width="1.9" fill="none" stroke-linecap="round" stroke-linejoin="round"/></svg>
<div class="t" style="left:903.4px;top:371.74px;font-size:14.6px;line-height:18px;color:#b3b6ba;font-weight:normal;transform:scaleX(1.0113);transform-origin:0 0;">Horizontal Ali...</div>
<div class="r" style="left:1010px;top:367px;width:114px;height:27px;background:#1e2229;border-radius:3px"></div>
<div class="t" style="left:1016.3px;top:371.74px;font-size:14.6px;line-height:18px;color:#cdcfd2;font-weight:normal;transform:scaleX(1.0082);transform-origin:0 0;">Left</div>
<svg class="r" style="left:1107px;top:375.8px" width="14.00" height="10.20"><path d="M3.10 3.10 L7.00 7.10 L10.90 3.10" stroke="#b5b8bc" stroke-width="2.2" fill="none" stroke-linecap="round" stroke-linejoin="round"/></svg>
<div class="t" style="left:903.4px;top:403.94px;font-size:14.6px;line-height:18px;color:#b3b6ba;font-weight:normal;transform:scaleX(0.9979);transform-origin:0 0;">Vertical Align...</div>
<div class="r" style="left:1010px;top:399px;width:114px;height:27px;background:#1e2229;border-radius:3px"></div>
<div class="t" style="left:1016.3px;top:403.94px;font-size:14.6px;line-height:18px;color:#cdcfd2;font-weight:normal;transform:scaleX(0.9830);transform-origin:0 0;">Top</div>
<svg class="r" style="left:1107px;top:408px" width="14.00" height="10.20"><path d="M3.10 3.10 L7.00 7.10 L10.90 3.10" stroke="#b5b8bc" stroke-width="2.2" fill="none" stroke-linecap="round" stroke-linejoin="round"/></svg>
<div class="t" style="left:903.4px;top:435.94px;font-size:14.6px;line-height:18px;color:#b3b6ba;font-weight:normal;transform:scaleX(1.0112);transform-origin:0 0;">Autowrap Mo...</div>
<div class="r" style="left:1010px;top:431px;width:114px;height:27px;background:#1e2229;border-radius:3px"></div>
<div class="t" style="left:1016.3px;top:435.94px;font-size:14.6px;line-height:18px;color:#cdcfd2;font-weight:normal;transform:scaleX(1.0573);transform-origin:0 0;">Off</div>
<svg class="r" style="left:1107px;top:440px" width="14.00" height="10.20"><path d="M3.10 3.10 L7.00 7.10 L10.90 3.10" stroke="#b5b8bc" stroke-width="2.2" fill="none" stroke-linecap="round" stroke-linejoin="round"/></svg>
<div class="t" style="left:903.5px;top:466.94px;font-size:14.6px;line-height:18px;color:#b3b6ba;font-weight:normal;transform:scaleX(0.9874);transform-origin:0 0;">Clip Text</div>
<div class="r" style="left:1010px;top:463px;width:114px;height:26px;background:#1e2229;border-radius:3px"></div>
<div class="r" style="left:1015px;top:469px;width:14px;height:14px;background:#494d55;border-radius:2px"></div>
<div class="t" style="left:1038.6px;top:466.94px;font-size:14.6px;line-height:18px;color:#cdcfd2;font-weight:normal;transform:scaleX(0.9590);transform-origin:0 0;">On</div>
<div class="t" style="left:903.3px;top:497.94px;font-size:14.6px;line-height:18px;color:#b3b6ba;font-weight:normal;transform:scaleX(0.9950);transform-origin:0 0;">Text Overrun ...</div>
<div class="r" style="left:1010px;top:493px;width:114px;height:27px;background:#1e2229;border-radius:3px"></div>
<div class="t" style="left:1016.4px;top:497.94px;font-size:14.6px;line-height:18px;color:#cdcfd2;font-weight:normal;transform:scaleX(1.0313);transform-origin:0 0;">Trim Nothing</div>
<svg class="r" style="left:1107.5px;top:502px" width="13.70" height="10.20"><path d="M3.10 3.10 L6.85 7.10 L10.60 3.10" stroke="#b5b8bc" stroke-width="2.2" fill="none" stroke-linecap="round" stroke-linejoin="round"/></svg>
<div class="t" style="left:903.3px;top:528.94px;font-size:14.6px;line-height:18px;color:#b3b6ba;font-weight:normal;transform:scaleX(0.9816);transform-origin:0 0;">Uppercase</div>
<div class="r" style="left:1010px;top:525px;width:114px;height:26px;background:#1e2229;border-radius:3px"></div>
<div class="r" style="left:1015px;top:531px;width:14px;height:14px;background:#494d55;border-radius:2px"></div>
<div class="t" style="left:1038.6px;top:528.94px;font-size:14.6px;line-height:18px;color:#cdcfd2;font-weight:normal;transform:scaleX(0.9590);transform-origin:0 0;">On</div>
<div class="r" style="left:895px;top:551px;width:229px;height:44px;background:#262b33;"></div>
<svg class="r" style="left:898px;top:557px" width="8" height="10" viewBox="0 0 8 10"><path d="M2 1.5 L5.5 5 L2 8.5" stroke="#9a9ea4" stroke-width="1.6" fill="none"/></svg>
<div class="t" style="left:909.3px;top:552.94px;font-size:14.6px;line-height:18px;color:#cdcfd2;font-weight:bold;transform:scaleX(0.9853);transform-origin:0 0;">Displayed Text</div>
<svg class="r" style="left:898px;top:579px" width="8" height="10" viewBox="0 0 8 10"><path d="M2 1.5 L5.5 5 L2 8.5" stroke="#9a9ea4" stroke-width="1.6" fill="none"/></svg>
<div class="t" style="left:909.3px;top:574.94px;font-size:14.6px;line-height:18px;color:#cdcfd2;font-weight:bold;transform:scaleX(0.9315);transform-origin:0 0;">BiDi</div>
<div class="r" style="left:895px;top:595px;width:229px;height:22px;background:#3f444c;border-radius:3px"></div>
<svg class="r" style="left:972px;top:599px" width="16" height="16" viewBox="0 0 16 16"><circle cx="8" cy="7.2" r="5.2" stroke="#8eef97" stroke-width="2" fill="none"/></svg>
<div class="t" style="left:994.3px;top:597.44px;font-size:14.6px;line-height:18px;color:#cdcfd2;font-weight:bold;transform:scaleX(0.9846);transform-origin:0 0;">Control</div>
<div class="r" style="left:895px;top:617px;width:229px;height:19px;background:#262b33;"></div>
<svg class="r" style="left:898px;top:622px" width="8" height="10" viewBox="0 0 8 10"><path d="M2 1.5 L5.5 5 L2 8.5" stroke="#9a9ea4" stroke-width="1.6" fill="none"/></svg>
<div class="t" style="left:909.3px;top:618.44px;font-size:14.6px;line-height:18px;color:#cdcfd2;font-weight:bold;transform:scaleX(0.9958);transform-origin:0 0;">Layout</div>
</body></html>
